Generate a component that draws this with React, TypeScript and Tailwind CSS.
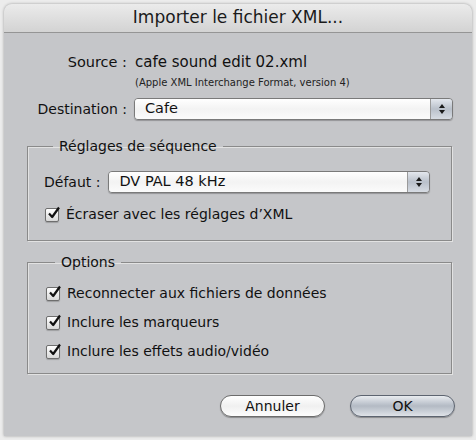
import React from "react";

const font = { fontFamily: '"DejaVu Sans", "Lucida Grande", sans-serif' };

function Arrows() {
  return (
    <svg width="8" height="12" viewBox="0 0 8 12">
      <path d="M4 1 L7 5 L1 5 Z" fill="#1a1a1a" />
      <path d="M4 11 L7 7 L1 7 Z" fill="#1a1a1a" />
    </svg>
  );
}

function Popup({ value, className }: { value: string; className: string }) {
  return (
    <div
      className={`flex h-[22px] shrink-0 items-stretch overflow-hidden rounded-[4px] border border-[#7a7a7a] shadow-[0_1px_1px_rgba(0,0,0,0.25)] ${className}`}
    >
      <div className="flex flex-1 items-center bg-gradient-to-b from-[#ffffff] via-[#f3f3f3] to-[#fbfbfb] pl-[10px] text-[14.5px] text-[#111]">
        {value}
      </div>
      <div className="flex w-[22px] items-center justify-center border-l border-[#9a9a9a] bg-gradient-to-b from-[#e4e8ee] via-[#b9c0ca] to-[#d7dce3]">
        <Arrows />
      </div>
    </div>
  );
}

function Check({ label }: { label: string }) {
  return (
    <div className="flex h-[29px] items-center">
      <div className="relative mr-[7px] h-[14px] w-[14px] shrink-0 rounded-[2px] border border-[#6e6e6e] bg-gradient-to-b from-[#ffffff] to-[#d8d8d8] shadow-[0_1px_1px_rgba(0,0,0,0.2)]">
        <svg className="absolute left-[1px] top-[-3px]" width="14" height="14" viewBox="0 0 14 14">
          <path d="M2 7.5 L5.2 11 L12 1.5" fill="none" stroke="#111" strokeWidth="2.2" strokeLinejoin="round" />
        </svg>
      </div>
      <span className="whitespace-nowrap text-[14px] text-[#111]">{label}</span>
    </div>
  );
}

function Group({ title, children, className }: { title: string; children: React.ReactNode; className: string }) {
  return (
    <fieldset
      className={`ml-[23px] mr-[20px] border border-[#8a8a8a] shadow-[inset_1px_1px_0_#e2e2e2,1px_1px_0_#e2e2e2] ${className}`}
    >
      <legend className="ml-[9px] px-[6px] text-[14px] leading-[18px] text-[#111]">{title}</legend>
      {children}
    </fieldset>
  );
}

export default function App() {
  return (
    <div className="h-[440px] w-[476px] bg-[#ececec] p-[4px]" style={font}>
      <div className="flex h-[432px] w-[468px] flex-col overflow-hidden rounded-t-[8px] bg-[#c5c6c9] shadow-[0_0_3px_rgba(0,0,0,0.35)]">
        <div className="flex h-[29px] shrink-0 items-center justify-center border-b border-[#959595] bg-gradient-to-b from-[#ebebeb] to-[#d3d3d3] text-[17px] text-[#1a1a1a]">
          Importer le fichier XML...
        </div>

        <div className="mt-[20px] flex">
          <div className="w-[123px] text-right text-[14.5px] leading-[18px] text-[#111]">Source :</div>
          <div className="ml-[8px] flex flex-col">
            <div className="text-[15px] leading-[18px] text-[#111]">cafe sound edit 02.xml</div>
            <div className="mt-[5px] text-[10px] leading-[13px] text-[#222]">(Apple XML Interchange Format, version 4)</div>
          </div>
        </div>

        <div className="mt-[9px] flex items-center">
          <div className="w-[123px] whitespace-nowrap text-right text-[14px] text-[#111]">Destination :</div>
          <Popup value="Cafe" className="ml-[7px] w-[319px]" />
        </div>

        <Group title="Réglages de séquence" className="mt-[17px] h-[104px] pl-[16px]">
          <div className="mt-[16px] flex items-center">
            <div className="whitespace-nowrap text-[14px] text-[#111]">Défaut :</div>
            <Popup value="DV PAL 48 kHz" className="ml-[8px] w-[322px]" />
          </div>
          <div className="mt-[7px] pl-[1px]">
            <Check label="Écraser avec les réglages d’XML" />
          </div>
        </Group>

        <Group title="Options" className="mt-[12px] h-[121px] pl-[18px]">
          <div className="mt-[8px]">
            <Check label="Reconnecter aux fichiers de données" />
            <Check label="Inclure les marqueurs" />
            <Check label="Inclure les effets audio/vidéo" />
          </div>
        </Group>

        <div className="mt-[21px] flex justify-end gap-[25px] pr-[17px]">
          <button className="h-[22px] w-[105px] rounded-full border border-[#6c6c6c] bg-gradient-to-b from-[#ffffff] via-[#f0f0f0] to-[#fdfdfd] text-[14px] text-[#111] shadow-[0_1px_1px_rgba(0,0,0,0.3)]">
            Annuler
          </button>
          <button className="h-[22px] w-[105px] rounded-full border border-[#5d6470] bg-gradient-to-b from-[#e9ecf0] via-[#b3bac4] to-[#dfe3e8] text-[14px] text-[#111] shadow-[0_1px_1px_rgba(0,0,0,0.3)]">
            OK
          </button>
        </div>
      </div>
    </div>
  );
}
